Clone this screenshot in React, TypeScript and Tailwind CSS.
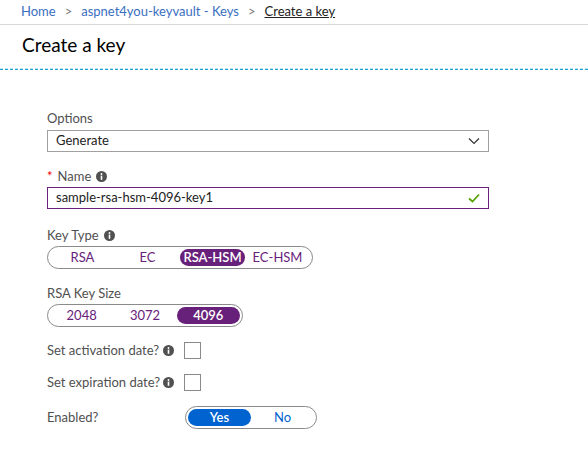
import React from "react";

const Info = () => (
  <svg width="11" height="11" viewBox="0 0 11 11" className="inline-block">
    <circle cx="5.5" cy="5.5" r="5.5" fill="#505050" />
    <rect x="4.7" y="4.6" width="1.6" height="4.2" fill="#fff" />
    <circle cx="5.5" cy="3" r="0.95" fill="#fff" />
  </svg>
);

function Pill({ items, selected, width, color, selBg }: { items: string[]; selected: number; width: number; color: string; selBg: string }) {
  return (
    <div
      className="flex h-[23px] rounded-full border border-[#8a8a8a] p-[2px]"
      style={{ width }}
    >
      {items.map((it, i) =>
        i === selected ? (
          <div
            key={it}
            className="flex flex-1 items-center justify-center rounded-full font-semibold text-white"
            style={{ backgroundColor: selBg }}
          >
            {it}
          </div>
        ) : (
          <div key={it} className="flex flex-1 items-center justify-center" style={{ color }}>
            {it}
          </div>
        )
      )}
    </div>
  );
}

export default function App() {
  return (
    <div className="h-[455px] w-[588px] bg-white text-[13px] text-[#505050]" style={{ fontFamily: "Lato, 'Open Sans', sans-serif" }}>
      <div className="flex h-[25px] items-center gap-[9px] border-b border-[#d8d8d8] pl-[21px] text-[#3a6fbf]">
        <span>Home</span>
        <span className="text-[#777]">&gt;</span>
        <span>aspnet4you-keyvault - Keys</span>
        <span className="text-[#777]">&gt;</span>
        <span className="text-[#222] underline">Create a key</span>
      </div>
      <div className="flex h-[43px] pl-[22px] pt-[6px] text-[19px] text-black">
        Create a key
      </div>
      <div className="h-px w-full bg-[repeating-linear-gradient(90deg,#b8e4f4_0_3px,transparent_3px_5px)]" />
      <div className="h-px w-full bg-[repeating-linear-gradient(90deg,#1ea0d2_0_3px,transparent_3px_5px)]" />
      <div className="flex flex-col pl-[47px] pt-[40px]">
        <div className="h-[16px] leading-[16px]">Options</div>
        <div className="mt-[4px] flex h-[22px] w-[442px] items-center justify-between border border-[#a0a0a0] px-[8px] text-[#222]">
          <span>Generate</span>
          <svg width="12" height="8" viewBox="0 0 12 8">
            <path d="M1 1.5 L6 6.5 L11 1.5" stroke="#333" strokeWidth="1.2" fill="none" />
          </svg>
        </div>
        <div className="mt-[16px] flex h-[16px] items-center gap-[5px] leading-[16px]">
          <span className="text-[#e00]">*</span>
          <span>Name</span>
          <Info />
        </div>
        <div className="mt-[3px] flex h-[22px] w-[442px] items-center justify-between border border-[#68217a] px-[8px] text-[#222]">
          <span>sample-rsa-hsm-4096-key1</span>
          <svg width="12" height="10" viewBox="0 0 12 10">
            <path d="M1 5.5 L4.5 8.5 L11 1.5" stroke="#57a300" strokeWidth="1.8" fill="none" />
          </svg>
        </div>
        <div className="mt-[18px] flex h-[16px] items-center gap-[5px] leading-[16px]">
          <span>Key Type</span>
          <Info />
        </div>
        <div className="mt-[3px]">
          <Pill items={["RSA", "EC", "RSA-HSM", "EC-HSM"]} selected={2} width={266} color="#68217a" selBg="#68217a" />
        </div>
        <div className="mt-[16px] h-[16px] leading-[16px]">RSA Key Size</div>
        <div className="mt-[3px]">
          <Pill items={["2048", "3072", "4096"]} selected={2} width={196} color="#68217a" selBg="#68217a" />
        </div>
        <div className="mt-[15px] flex h-[17px] items-center">
          <span className="w-[116px]">Set activation date?</span>
          <Info />
          <div className="ml-[10px] h-[17px] w-[17px] border border-[#8a8a8a]" />
        </div>
        <div className="mt-[15px] flex h-[17px] items-center">
          <span className="w-[116px]">Set expiration date?</span>
          <Info />
          <div className="ml-[10px] h-[17px] w-[17px] border border-[#8a8a8a]" />
        </div>
        <div className="mt-[15px] flex h-[23px] items-center">
          <span className="w-[138px]">Enabled?</span>
          <Pill items={["Yes", "No"]} selected={0} width={132} color="#0063cf" selBg="#0063cf" />
        </div>
      </div>
    </div>
  );
}
